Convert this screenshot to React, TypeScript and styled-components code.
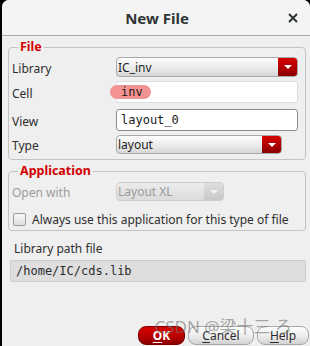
import styled, { createGlobalStyle } from 'styled-components';

const GlobalStyle = createGlobalStyle`
  html, body {
    margin: 0;
    padding: 0;
    background: #000;
    overflow: hidden;
  }
  #root {
    height: 346px;
  }
`;

const App = () => {
  return (
    <>
      <GlobalStyle />
      <Window>
        <TitleBar>
          <Title>New File</Title>
          <CloseButton>
            <svg width='10' height='10' viewBox='0 0 10 10'>
              <path d='M1 1 L9 9 M9 1 L1 9' stroke='#2e3436' strokeWidth='2' />
            </svg>
          </CloseButton>
        </TitleBar>
        <Body>
          <Group $pb={5}>
            <Legend>File</Legend>
            <Row $h={20}>
              <Label>Library</Label>
              <Combo $w={182}>
                <ComboText>IC_inv</ComboText>
                <DropButton>
                  <Arrow />
                </DropButton>
              </Combo>
            </Row>
            <Row $h={22} $mt={4}>
              <Label>Cell</Label>
              <FieldWrap $plain>
                <Highlight />
                <TextField>inv</TextField>
              </FieldWrap>
            </Row>
            <Row $h={22} $mt={6}>
              <Label>View</Label>
              <FieldWrap>
                <TextField>layout_0</TextField>
              </FieldWrap>
            </Row>
            <Row $h={19} $mt={4}>
              <Label>Type</Label>
              <Combo $w={166}>
                <ComboText>layout</ComboText>
                <DropButton>
                  <Arrow />
                </DropButton>
              </Combo>
            </Row>
          </Group>
          <Group $pb={3} $mt={4}>
            <Legend>Application</Legend>
            <Row $h={19} $mt={1}>
              <Label $disabled>Open with</Label>
              <Combo $w={108} $disabled>
                <ComboText $disabled>Layout XL</ComboText>
                <DropButton $disabled>
                  <Arrow $disabled />
                </DropButton>
              </Combo>
            </Row>
            <CheckRow>
              <CheckBox />
              <CheckText>Always use this application for this type of file</CheckText>
            </CheckRow>
          </Group>
          <PathLabel>Library path file</PathLabel>
          <PathBox>/home/IC/cds.lib</PathBox>
          <Spacer />
          <ButtonBar>
            <Button $primary $w={47}>
              <u>O</u>K
            </Button>
            <Button $w={66}>
              <u>C</u>ancel
            </Button>
            <Button $w={52}>
              <u>H</u>elp
            </Button>
            <Watermark>CSDN @梁十三 ろ</Watermark>
          </ButtonBar>
        </Body>
      </Window>
    </>
  );
};

const Window = styled.div`
  margin-left: 2px;
  width: 308px;
  height: 346px;
  background: #efefef;
  border-radius: 7px 7px 0 0;
  display: flex;
  flex-direction: column;
  font-family: 'Noto Sans', 'DejaVu Sans', sans-serif;
  font-size: 12px;
  color: #2e2e2e;
  overflow: hidden;
`;

const TitleBar = styled.div`
  height: 35px;
  flex: none;
  background: #f4f4f4;
  border-bottom: 1px solid #a8a8a8;
  display: flex;
  align-items: center;
  justify-content: center;
  position: relative;
`;

const Title = styled.div`
  font-size: 15px;
  font-weight: bold;
  color: #2e3436;
  margin-left: 2px;
`;

const CloseButton = styled.div`
  position: absolute;
  right: 12px;
  top: 13px;
  width: 10px;
  height: 10px;
  display: flex;
`;

const Body = styled.div`
  flex: 1;
  display: flex;
  flex-direction: column;
  padding: 0 0 1px 6px;
`;

const Group = styled.fieldset<{ $pb: number; $mt?: number }>`
  margin: ${(p) => p.$mt ?? 4}px 4px 0 0;
  padding: 3px 6px ${(p) => p.$pb}px 3px;
  border: 1px solid #c3c3c3;
  border-radius: 4px;
  min-width: 0;
`;

const Legend = styled.legend`
  color: #d40000;
  font-weight: bold;
  font-size: 12.5px;
  line-height: 14px;
  padding: 0 2px;
  margin-left: 6px;
`;

const Row = styled.div<{ $h: number; $mt?: number }>`
  display: flex;
  align-items: center;
  height: ${(p) => p.$h}px;
  margin-top: ${(p) => p.$mt ?? 0}px;
`;

const Label = styled.div<{ $disabled?: boolean }>`
  width: 104px;
  flex: none;
  color: ${(p) => (p.$disabled ? '#9c9c9c' : '#2e2e2e')};
  padding-top: 2px;
`;

const Combo = styled.div<{ $w: number; $disabled?: boolean }>`
  width: ${(p) => p.$w}px;
  height: 100%;
  box-sizing: border-box;
  display: flex;
  align-items: stretch;
  border: 1px solid ${(p) => (p.$disabled ? '#cdcdcd' : '#a9a9a9')};
  border-radius: 4px;
  background: ${(p) =>
    p.$disabled
      ? 'linear-gradient(#ececec, #dcdcdc)'
      : 'linear-gradient(#fdfdfd, #e9e9e9 60%, #d6d6d6)'};
  overflow: hidden;
`;

const ComboText = styled.div<{ $disabled?: boolean }>`
  flex: 1;
  padding-left: 1px;
  display: flex;
  align-items: center;
  color: ${(p) => (p.$disabled ? '#9a9a9a' : '#1e1e1e')};
`;

const DropButton = styled.div<{ $disabled?: boolean }>`
  width: 19px;
  flex: none;
  display: flex;
  align-items: center;
  justify-content: center;
  background: ${(p) =>
    p.$disabled
      ? 'linear-gradient(#dedede, #c9c9c9)'
      : 'linear-gradient(#d50000, #b00000 55%, #870000)'};
`;

const Arrow = styled.div<{ $disabled?: boolean }>`
  width: 0;
  height: 0;
  border-left: 4px solid transparent;
  border-right: 4px solid transparent;
  border-top: 4px solid ${(p) => (p.$disabled ? '#f4f4f4' : '#ffffff')};
`;

const FieldWrap = styled.div<{ $plain?: boolean }>`
  width: 182px;
  height: 100%;
  box-sizing: border-box;
  position: relative;
  background: #ffffff;
  border: 1px solid ${(p) => (p.$plain ? '#dedede' : '#8e8e8e')};
  border-radius: 3px;
`;

const TextField = styled.div`
  position: relative;
  height: 100%;
  padding-left: 4px;
  display: flex;
  align-items: center;
  font-family: 'DejaVu Sans Mono', monospace;
  font-size: 12px;
  color: #1a1a1a;
`;

const Highlight = styled.div`
  position: absolute;
  left: -7px;
  top: 3px;
  width: 41px;
  height: 14px;
  border-radius: 7px;
  background: #f39292;
`;

const CheckRow = styled.div`
  display: flex;
  align-items: center;
  gap: 6px;
  margin-top: 11px;
  height: 15px;
`;

const CheckBox = styled.div`
  width: 11px;
  height: 11px;
  border: 1px solid #9a9a9a;
  border-radius: 2px;
  background: linear-gradient(#fafafa, #dedede);
  margin-left: 1px;
`;

const CheckText = styled.div`
  color: #2e2e2e;
`;

const PathLabel = styled.div`
  margin: 9px 0 0 6px;
  height: 17px;
  line-height: 17px;
`;

const PathBox = styled.div`
  margin: 3px 4px 0 2px;
  height: 22px;
  box-sizing: border-box;
  background: #dedede;
  border: 1px solid #cdcdcd;
  border-radius: 2px;
  display: flex;
  align-items: center;
  padding-left: 5px;
  font-family: 'DejaVu Sans Mono', monospace;
  font-size: 12px;
  color: #2a2a2a;
`;

const Spacer = styled.div`
  flex: 1;
`;

const ButtonBar = styled.div`
  display: flex;
  justify-content: flex-end;
  gap: 3px;
  padding-right: 1px;
  position: relative;
`;

const Button = styled.div<{ $primary?: boolean; $w: number }>`
  width: ${(p) => p.$w}px;
  height: 19px;
  box-sizing: border-box;
  border-radius: 8px;
  display: flex;
  align-items: center;
  justify-content: center;
  border: 1px solid ${(p) => (p.$primary ? '#7a0000' : '#a8a8a8')};
  background: ${(p) =>
    p.$primary
      ? 'linear-gradient(#d80000, #b80000 55%, #8c0000)'
      : 'linear-gradient(#fdfdfd, #ececec 55%, #d2d2d2)'};
  color: ${(p) => (p.$primary ? '#ffffff' : '#2a2a2a')};
  font-weight: ${(p) => (p.$primary ? 'bold' : 'normal')};
  u {
    text-underline-offset: 2px;
  }
`;

const Watermark = styled.div`
  position: absolute;
  right: 18px;
  top: -13px;
  font-size: 17px;
  color: rgba(115, 115, 115, 0.62);
  font-family: 'Noto Sans', 'Noto Sans CJK SC', sans-serif;
  pointer-events: none;
  white-space: nowrap;
`;

export default App;
